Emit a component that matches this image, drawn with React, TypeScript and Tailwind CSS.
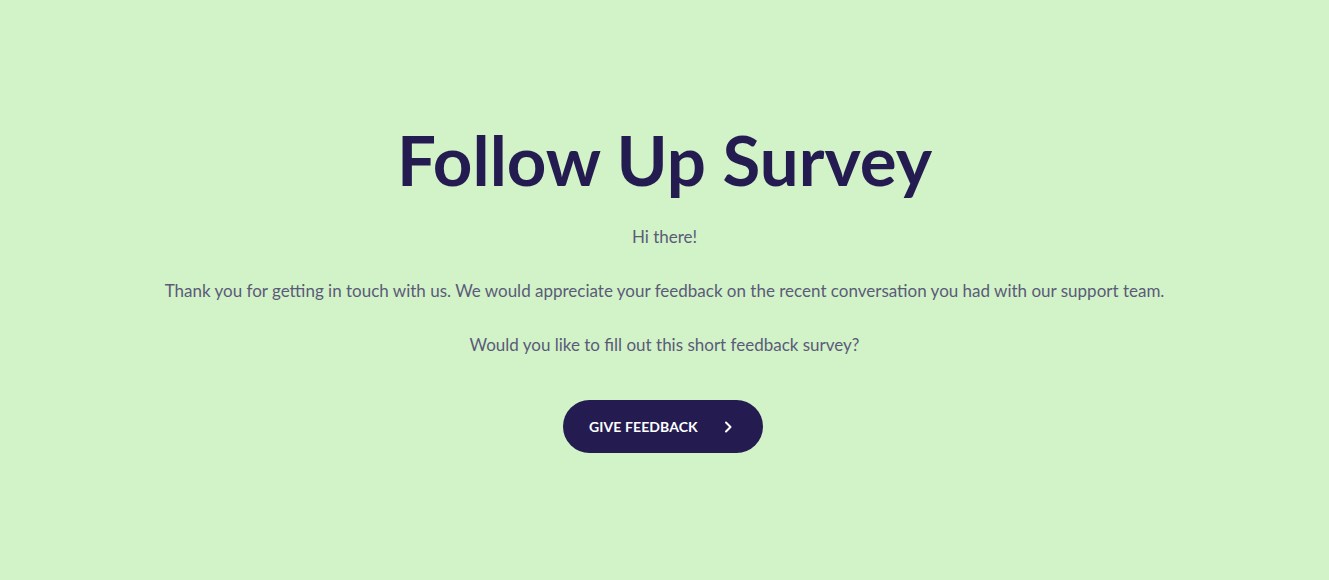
export default function App() {
  return (
    <main className="min-h-[580px] w-full bg-[#d2f2c8] font-['Lato','Liberation_Sans',sans-serif]">
      <div className="flex flex-col items-center pt-[118px] text-center">
        <h1 className="text-[69px] font-bold leading-[84px] text-[#241c51]">Follow Up Survey</h1>
        <div className="mt-[23px] flex flex-col gap-[30px] text-[17px] leading-[24px] text-[#5b5b78]">
          <p>Hi there!</p>
          <p>Thank you for getting in touch with us. We would appreciate your feedback on the recent conversation you had with our support team.</p>
          <p>Would you like to fill out this short feedback survey?</p>
        </div>
        <button className="mt-[43px] -ml-[3px] flex h-[53px] w-[200px] items-center rounded-full bg-[#241c51] pl-[26px] text-white">
          <span className="text-[14px] font-bold tracking-[0.1px]">GIVE FEEDBACK</span>
          <svg className="ml-[24px]" width="12" height="14" viewBox="0 0 12 14" fill="none">
            <path d="M4 2.5L8.5 7L4 11.5" stroke="white" strokeWidth="2" strokeLinecap="round" strokeLinejoin="round" />
          </svg>
        </button>
      </div>
    </main>
  );
}
